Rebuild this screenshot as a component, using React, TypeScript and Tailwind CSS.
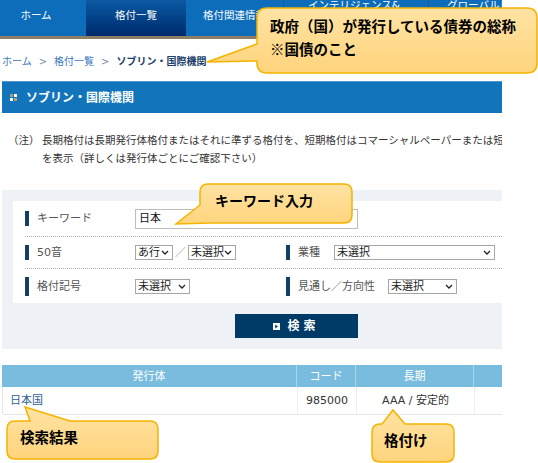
import React from "react";

function Chevron() {
  return (
    <svg width="8" height="5" viewBox="0 0 8 5" className="shrink-0">
      <path d="M1 1 L4 4 L7 1" fill="none" stroke="#222" strokeWidth="1.3" />
    </svg>
  );
}

function Sel({ w, text }: { w: string; text: string }) {
  return (
    <div
      className={`${w} h-[15px] border border-[#a6a6a6] bg-white flex items-center justify-between pl-[2px] pr-[3px] text-[11px] leading-none text-[#222]`}
    >
      <span>{text}</span>
      <Chevron />
    </div>
  );
}

function Label({ text, h = "h-[15px]" }: { text: string; h?: string }) {
  return (
    <div className="flex items-center">
      <div className={`w-[4px] ${h} bg-[#143e66]`} />
      <span className="ml-[8px] text-[11px] leading-none text-[#555]">{text}</span>
    </div>
  );
}

export default function App() {
  return (
    <div className="relative w-[538px] h-[463px] overflow-hidden bg-white font-['DejaVu_Sans','Noto_Sans_CJK_JP',sans-serif]">
      <div className="w-[502px] overflow-hidden">
        <div className="w-[560px]">
          {/* nav */}
          <div className="flex h-[39px] bg-[#0d6dbb] border-b-[3px] border-[#8f7e66] text-white text-[10.5px]">
            <div className="w-[86px] flex items-center justify-center pr-[14px] pb-[4px]">ホーム</div>
            <div className="w-[100px] flex items-center justify-center pb-[4px] bg-gradient-to-b from-[#0c5aa3] to-[#002a6c]">格付一覧</div>
            <div className="w-[97px] flex items-center pl-[17px] pb-[4px] whitespace-nowrap">格付関連情報</div>
            <div className="w-[145px] border-l border-[#1d5c99] flex flex-col items-start pl-[24px] leading-[13px] -mt-[1px] whitespace-nowrap">
              <span>インテリジェンス&amp;</span>
              <span>リサーチ</span>
            </div>
            <div className="w-[130px] border-l border-[#1d5c99] flex flex-col items-start pl-[18px] leading-[13px] -mt-[1px] whitespace-nowrap">
              <span>グローバルレポート</span>
              <span>海外</span>
            </div>
          </div>

          <div className="pl-[2px]">
            {/* breadcrumb */}
            <div className="mt-[16px] h-[14px] flex items-center text-[10px] leading-[14px] whitespace-nowrap">
              <span className="text-[#3a78bc]">ホーム</span>
              <span className="mx-[7px] text-[#7a8ea4]">&gt;</span>
              <span className="text-[#3a78bc]">格付一覧</span>
              <span className="mx-[7px] text-[#7a8ea4]">&gt;</span>
              <span className="font-bold text-[#1b3f6a]">ソブリン・国際機関</span>
            </div>

            {/* heading */}
            <div className="mt-[12px] h-[32px] bg-[#1275bc] border-t border-[#4d98d0] flex items-center pl-[8px]">
              <div className="grid grid-cols-[3px_3px] gap-[1px]">
                <div className="w-[3px] h-[3px] bg-[#b29c78]" />
                <div className="w-[3px] h-[3px] bg-white" />
                <div className="w-[3px] h-[3px] bg-white" />
                <div className="w-[3px] h-[3px] bg-[#b29c78]" />
              </div>
              <span className="ml-[9px] text-white font-bold text-[12px] leading-none">ソブリン・国際機関</span>
            </div>

            {/* note */}
            <div className="mt-[18px] pl-[6px] flex text-[10.5px] leading-[18px] text-[#333]">
              <div className="w-[34px] shrink-0">（注）</div>
              <div className="whitespace-nowrap">
                <div>長期格付は長期発行体格付またはそれに準ずる格付を、短期格付はコマーシャルペーパーまたは短期発行体格付</div>
                <div>を表示（詳しくは発行体ごとにご確認下さい）</div>
              </div>
            </div>

            {/* search panel */}
            <div className="mt-[23px] bg-[#eef1f6] pt-[11px] pb-[11px] pl-[11px]">
              <div className="bg-white pl-[12px]">
                <div className="h-[36px] flex items-center border-b border-dotted border-[#a3b2c2]">
                  <div className="w-[110px]"><Label text="キーワード" /></div>
                  <div className="w-[223px] h-[20px] border border-[#bdbdbd] flex items-center pl-[3px] text-[11px] leading-none text-[#111]">日本</div>
                </div>
                <div className="h-[32px] flex items-center border-b border-dotted border-[#a3b2c2]">
                  <div className="w-[261px] flex items-center">
                    <div className="w-[110px]"><Label text="50音" /></div>
                    <Sel w="w-[38px]" text="あ行" />
                    <span className="w-[15px] text-center text-[11px] text-[#888] leading-none">／</span>
                    <Sel w="w-[48px]" text="未選択" />
                  </div>
                  <div className="flex items-center">
                    <div className="w-[48px]"><Label text="業種" /></div>
                    <Sel w="w-[161px]" text="未選択" />
                  </div>
                </div>
                <div className="h-[34px] flex items-center">
                  <div className="w-[261px] flex items-center">
                    <div className="w-[110px]"><Label text="格付記号" h="h-[19px]" /></div>
                    <Sel w="w-[55px]" text="未選択" />
                  </div>
                  <div className="flex items-center">
                    <div className="w-[102px]"><Label text="見通し／方向性" h="h-[19px]" /></div>
                    <Sel w="w-[69px]" text="未選択" />
                  </div>
                </div>
              </div>
              <div className="mt-[11px] ml-[222px] w-[123px] h-[24px] bg-[#003a66] flex items-center justify-center gap-[7px] text-white">
                <div className="w-[7px] h-[7px] bg-white flex items-center justify-center">
                  <svg width="5" height="5" viewBox="0 0 5 5"><path d="M1.2 0.6 L4 2.5 L1.2 4.4 Z" fill="#003a66" /></svg>
                </div>
                <span className="text-[12px] leading-none font-bold tracking-[4px]">検索</span>
              </div>
            </div>

            {/* table */}
            <div className="mt-[16px] text-[11px]">
              <div className="grid grid-cols-[295px_59px_118px_80px] h-[22px] bg-[#79bcdd] text-white leading-none">
                <div className="flex items-center justify-center border-r border-[#a9d4ea]">発行体</div>
                <div className="flex items-center justify-center border-r border-[#a9d4ea]">コード</div>
                <div className="flex items-center justify-center border-r border-[#a9d4ea]">長期</div>
                <div />
              </div>
              <div className="grid grid-cols-[295px_59px_118px_80px] h-[28px] bg-white border-l border-b border-[#e3e7ec] rounded-bl-[3px] leading-none text-[#333]">
                <div className="flex items-center pl-[7px] border-r border-[#edf0f3] text-[#2f5f92]">日本国</div>
                <div className="flex items-center justify-center border-r border-[#edf0f3]">985000</div>
                <div className="flex items-center justify-center border-r border-[#edf0f3]">AAA / 安定的</div>
                <div />
              </div>
            </div>
          </div>
        </div>
      </div>

      {/* callouts */}
      <svg className="absolute left-0 top-0 pointer-events-none" width="538" height="463" viewBox="0 0 538 463">
        <defs>
          <linearGradient id="cg" x1="0" y1="0" x2="0" y2="1">
            <stop offset="0" stopColor="#ffe3a3" />
            <stop offset="1" stopColor="#ffd47d" />
          </linearGradient>
        </defs>
        <path
          d="M267 8 H527 Q537 8 537 18 V63 Q537 73 527 73 H267 Q257 73 257 63 V61 L207 62 L257 44 V18 Q257 8 267 8 Z"
          fill="url(#cg)" stroke="#f4b400" strokeWidth="1.5"
        />
        <path
          d="M208 184 H344 Q352 184 352 192 V215 Q352 223 344 223 H210 L176 224 L200 205 V192 Q200 184 208 184 Z"
          fill="url(#cg)" stroke="#f4b400" strokeWidth="1.5"
        />
        <path
          d="M15 421 H30 L25 407 L70 421 H150 Q158 421 158 429 V451 Q158 459 150 459 H15 Q7 459 7 451 V429 Q7 421 15 421 Z"
          fill="url(#cg)" stroke="#f4b400" strokeWidth="1.5"
        />
        <path
          d="M380 424 H382 L393 410 L405 424 H446 Q454 424 454 432 V454 Q454 462 446 462 H380 Q372 462 372 454 V432 Q372 424 380 424 Z"
          fill="url(#cg)" stroke="#f4b400" strokeWidth="1.5"
        />
      </svg>
      <div className="absolute left-[270px] top-[14px] text-[14.5px] leading-[23px] font-bold text-black font-['Noto_Sans_CJK_JP',sans-serif] whitespace-nowrap">
        <div>政府（国）が発行している債券の総称</div>
        <div>※国債のこと</div>
      </div>
      <div className="absolute left-[215px] top-[190px] text-[14px] leading-[20px] font-bold text-black font-['Noto_Sans_CJK_JP',sans-serif] whitespace-nowrap">キーワード入力</div>
      <div className="absolute left-[20px] top-[427px] text-[14.5px] leading-[20px] font-bold text-black font-['Noto_Sans_CJK_JP',sans-serif] whitespace-nowrap">検索結果</div>
      <div className="absolute left-[384px] top-[430px] text-[14.5px] leading-[20px] font-bold text-black font-['Noto_Sans_CJK_JP',sans-serif] whitespace-nowrap">格付け</div>
    </div>
  );
}
